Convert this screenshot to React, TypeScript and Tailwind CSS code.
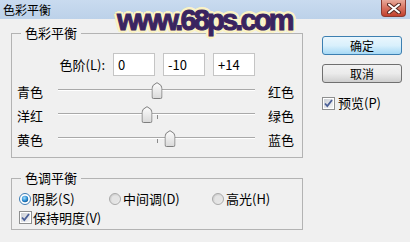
import React from "react";

const cjk = "font-['Noto_Sans_CJK_SC','Noto_Sans',sans-serif]";

function CloseButton() {
    return (
        <div className="mr-[4px] w-[25px] h-[17px] rounded-b-[4px] border border-t-0 border-[#8b3b31] bg-gradient-to-b from-[#e8aa9c] via-[#d7715f] to-[#c2402d] flex items-center justify-center">
            <svg width="14" height="11" viewBox="0 0 14 11">
                <path d="M2 1.5 L12 9.5 M12 1.5 L2 9.5" stroke="#5a2a24" strokeWidth="4" strokeLinecap="round" />
                <path d="M2 1.5 L12 9.5 M12 1.5 L2 9.5" stroke="#ffffff" strokeWidth="2" strokeLinecap="round" />
            </svg>
        </div>
    );
}

function Checkbox() {
    return (
        <svg width="13" height="13" viewBox="0 0 13 13" className="shrink-0">
            <defs>
                <linearGradient id="cbg" x1="0" y1="0" x2="1" y2="1">
                    <stop offset="0" stopColor="#cbcfd5" />
                    <stop offset="1" stopColor="#f6f6f6" />
                </linearGradient>
            </defs>
            <rect x="0.5" y="0.5" width="12" height="12" fill="#fff" stroke="#8e8f8f" />
            <rect x="2" y="2" width="9" height="9" fill="url(#cbg)" />
            <path d="M3 6.5 L5.3 9 L10 3" fill="none" stroke="#4a5f97" strokeWidth="1.8" />
        </svg>
    );
}

function Radio({ on }: { on?: boolean }) {
    return (
        <svg width="12" height="12" viewBox="0 0 12 12" className="shrink-0">
            <defs>
                <radialGradient id="rdot" cx="0.4" cy="0.35" r="0.7">
                    <stop offset="0" stopColor="#a9e0fb" />
                    <stop offset="0.6" stopColor="#2c8fd6" />
                    <stop offset="1" stopColor="#13548c" />
                </radialGradient>
                <linearGradient id="roff" x1="0" y1="0" x2="1" y2="1">
                    <stop offset="0" stopColor="#c9c9c9" />
                    <stop offset="1" stopColor="#f4f4f4" />
                </linearGradient>
            </defs>
            <circle cx="6" cy="6" r="5.5" fill={on ? "#ffffff" : "url(#roff)"} stroke={on ? "#3b7ab3" : "#a9a9a9"} />
            {on && <circle cx="6" cy="6" r="3.2" fill="url(#rdot)" />}
            {!on && <circle cx="6" cy="6" r="3.5" fill="#e4e4e4" />}
        </svg>
    );
}

function Thumb() {
    return (
        <svg width="11" height="17" viewBox="0 0 11 17">
            <defs>
                <linearGradient id="thg" x1="0" y1="0" x2="0" y2="1">
                    <stop offset="0" stopColor="#fdfdfd" />
                    <stop offset="1" stopColor="#d9d9d9" />
                </linearGradient>
            </defs>
            <path d="M0.5 15 V6 Q0.5 3 5.5 0.7 Q10.5 3 10.5 6 V15 Q10.5 16.5 9 16.5 H2 Q0.5 16.5 0.5 15 Z" fill="url(#thg)" stroke="#7d7d7d" />
        </svg>
    );
}

function SliderRow({ left, right, value }: { left: string; right: string; value: number }) {
    const pct = 50 + value / 2;
    return (
        <div className="h-[24px] flex items-center">
            <span className="w-[46px] pl-[5px] leading-[14px]">{left}</span>
            <div className="relative w-[197px] h-[2px] -mt-[4px] border-t border-[#a9a9a9] border-b border-b-white">
                <div className="absolute left-1/2 top-[1px] w-px h-[4px] bg-[#8a8a8a]" />
                <div className="absolute top-[-8px] -translate-x-1/2 leading-none" style={{ left: `${pct}%` }}>
                    <Thumb />
                </div>
            </div>
            <span className="ml-[13px] leading-[14px]">{right}</span>
        </div>
    );
}

function Button({ label, primary }: { label: string; primary?: boolean }) {
    return (
        <div
            className={
                primary
                    ? "w-[80px] h-[19px] rounded-[3px] border border-[#3c7fb1] bg-gradient-to-b from-[#eaf6fd] via-[#d9f0fc] to-[#a7d9f5] flex items-center justify-center text-[12px] leading-[14px]"
                    : "w-[80px] h-[19px] rounded-[3px] border border-[#707070] bg-gradient-to-b from-[#f2f2f2] via-[#ebebeb] to-[#cfcfcf] flex items-center justify-center text-[12px] leading-[14px]"
            }
        >
            {label}
        </div>
    );
}

export default function App() {
    return (
        <div className={`relative w-[410px] h-[242px] overflow-hidden bg-[#f0f0f0] text-[13px] text-black ${cjk}`}>
            <div className="h-[19px] flex items-start justify-between bg-gradient-to-b from-[#c9dbef] to-[#bcd1e9]">
                <span className="pl-[3px] text-[12px] leading-[19px]">色彩平衡</span>
                <CloseButton />
            </div>

            <div className="flex pt-[7px] pl-[11px]">
                <div className="w-[292px] flex flex-col gap-[13px]">
                    <fieldset className="border border-[#b3b3b3] pb-[5px]">
                        <legend className="ml-[9px] px-[4px] leading-[14px]">色彩平衡</legend>
                        <div className="mt-[13px] flex items-center">
                            <span className="w-[101px] pr-[8px] text-right leading-[14px]">色阶(L):</span>
                            <div className="flex gap-[8px]">
                                {["0", "-10", "+14"].map(v => (
                                    <input
                                        key={v}
                                        readOnly
                                        value={v}
                                        className="w-[42px] h-[23px] border border-[#c5c5c5] bg-white px-[4px] text-[13px] leading-[14px] outline-none"
                                    />
                                ))}
                            </div>
                        </div>
                        <div className="mt-[4px] flex flex-col">
                            <SliderRow left="青色" right="红色" value={0} />
                            <SliderRow left="洋红" right="绿色" value={-10} />
                            <SliderRow left="黄色" right="蓝色" value={14} />
                        </div>
                    </fieldset>

                    <fieldset className="border border-[#b3b3b3] pb-[5px]">
                        <legend className="ml-[9px] px-[4px] leading-[14px]">色调平衡</legend>
                        <div className="mt-[7px] pl-[7px] h-[13px] flex items-center">
                            <div className="w-[90px] flex items-center gap-[1px]">
                                <Radio on />
                                <span className="leading-[14px]">阴影(S)</span>
                            </div>
                            <div className="w-[103px] flex items-center gap-[2px]">
                                <Radio />
                                <span className="leading-[14px]">中间调(D)</span>
                            </div>
                            <div className="flex items-center gap-[2px]">
                                <Radio />
                                <span className="leading-[14px]">高光(H)</span>
                            </div>
                        </div>
                        <div className="mt-[6px] pl-[7px] h-[13px] flex items-center gap-[1px]">
                            <Checkbox />
                            <span className="leading-[14px]">保持明度(V)</span>
                        </div>
                    </fieldset>
                </div>

                <div className="ml-[19px] pt-[10px] flex flex-col">
                    <Button label="确定" primary />
                    <div className="mt-[9px]">
                        <Button label="取消" />
                    </div>
                    <div className="mt-[13px] flex items-center gap-[3px]">
                        <Checkbox />
                        <span className="leading-[14px]">预览(P)</span>
                    </div>
                </div>
            </div>

            {/* watermark over the title bar */}
            <div className="absolute left-[117px] top-[0px] font-['Liberation_Sans',sans-serif] font-bold text-[29px] leading-[40px] tracking-[-2.8px] text-[#3a2460] [-webkit-text-stroke:1px_#3a2460] [text-shadow:2px_0_#fbf3c4,-2px_0_#fbf3c4,0_2px_#fbf3c4,0_-2px_#fbf3c4,2px_2px_#fbf3c4,-2px_2px_#fbf3c4,2px_-2px_#fbf3c4,-2px_-2px_#fbf3c4,3px_0_#fbf3c4,-3px_0_#fbf3c4,0_3px_#fbf3c4,0_-3px_#fbf3c4]">
                www.68ps.com
            </div>
        </div>
    );
}
